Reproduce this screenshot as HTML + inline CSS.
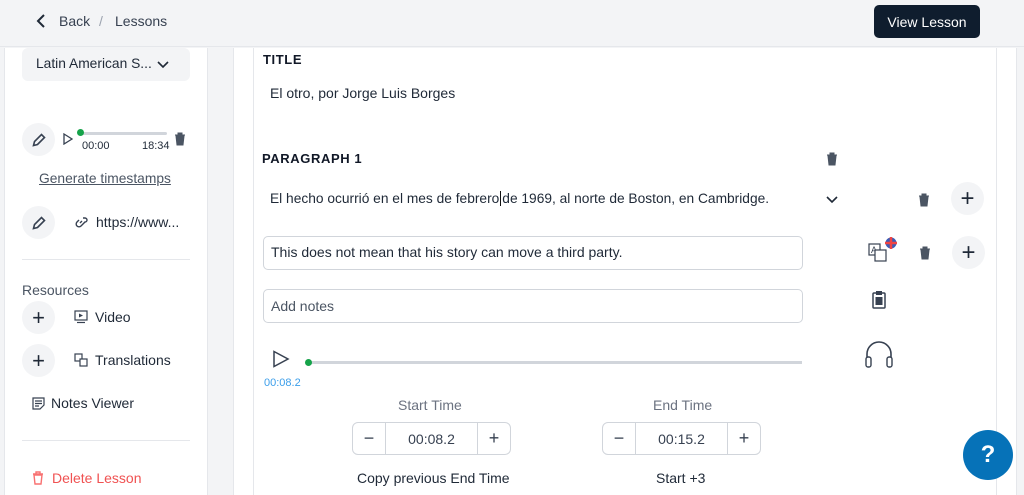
<!DOCTYPE html>
<html><head><meta charset="utf-8"><style>
*{box-sizing:border-box;margin:0;padding:0}
body{width:1024px;height:495px;overflow:hidden;background:#f3f4f6;font-family:"Liberation Sans",sans-serif;color:#1f2937;position:relative;font-size:14px}
.a{position:absolute}
.circ{position:absolute;width:33px;height:33px;border-radius:50%;background:#f3f4f6;display:flex;align-items:center;justify-content:center}
.lbl{font-weight:bold;font-size:13px;letter-spacing:.6px;color:#111827}
.box{position:absolute;border:1px solid #d1d5db;border-radius:5px;background:#fff}
.stepper{position:absolute;height:33px;border:1px solid #d1d5db;border-radius:6px;background:#fff;display:flex}
.stepper div{display:flex;align-items:center;justify-content:center;font-size:14px;color:#374151}
</style></head><body>
<div class="a" style="left:0;top:0;width:1024px;height:47px;background:#f3f4f6;border-bottom:1px solid #e5e7eb"></div>
<svg class="a" style="left:35px;top:13px" width="12" height="16" viewBox="0 0 12 16"><path d="M9 2 L3 8 L9 14" fill="none" stroke="#1f2937" stroke-width="2"/></svg>
<div class="a" style="left:59px;top:13px;color:#374151">Back</div>
<div class="a" style="left:99px;top:13px;color:#9ca3af">/</div>
<div class="a" style="left:115px;top:13px;color:#374151">Lessons</div>
<div class="a" style="left:874px;top:5px;width:106px;height:33px;background:#0f1d2e;border-radius:5px;color:#fff;display:flex;align-items:center;justify-content:center;font-size:14px">View Lesson</div>

<!-- sidebar -->
<div class="a" style="left:4px;top:48px;width:204px;height:447px;background:#fff;border-left:1px solid #e5e7eb;border-right:1px solid #e5e7eb"></div>
<div class="a" style="left:22px;top:48px;width:168px;height:33px;background:#f3f4f6;border-radius:6px"></div>
<div class="a" style="left:36px;top:56px;font-size:13.8px">Latin American S...</div>
<svg class="a" style="left:157px;top:61px" width="12" height="8"><path d="M1 1 L6 6 L11 1" fill="none" stroke="#1f2937" stroke-width="1.6"/></svg>
<div class="circ" style="left:22px;top:123px"><svg width="16" height="16" viewBox="0 0 16 16"><path d="M2.5 13.5 L3.5 9.5 L10.5 2.5 L13.5 5.5 L6.5 12.5 Z" fill="none" stroke="#374151" stroke-width="1.6"/></svg></div>
<svg class="a" style="left:63px;top:133px" width="10" height="12"><path d="M1 1 L9 6 L1 11 Z" fill="none" stroke="#374151" stroke-width="1.3"/></svg>
<div class="a" style="left:80px;top:132px;width:87px;height:3px;background:#d1d5db;border-radius:2px"></div>
<div class="a" style="left:77px;top:129px;width:7px;height:7px;border-radius:50%;background:#16a34a"></div>
<div class="a" style="left:82px;top:140px;font-size:11px">00:00</div>
<div class="a" style="left:142px;top:140px;font-size:11px">18:34</div>
<svg class="a" style="left:174px;top:132px" width="12" height="14" viewBox="0 0 12 14"><path d="M1 3 H11 M4 3 V1 H8 V3 M2 4 L3 13 H9 L10 4 Z" fill="#4b5563" stroke="#4b5563" stroke-width="1"/></svg>
<div class="a" style="left:39px;top:171px;color:#4b5563;text-decoration:underline;font-size:13.8px">Generate timestamps</div>
<div class="circ" style="left:22px;top:206px"><svg width="16" height="16" viewBox="0 0 16 16"><path d="M2.5 13.5 L3.5 9.5 L10.5 2.5 L13.5 5.5 L6.5 12.5 Z" fill="none" stroke="#374151" stroke-width="1.6"/></svg></div>
<svg class="a" style="left:74px;top:215px" width="14" height="14" viewBox="0 0 14 14"><path d="M6 8 L8 6 M5 5 L3 7 A2 2 0 0 0 7 11 L9 9 M9 3 L11 3 A2 2 0 0 1 11 7 L9 9" fill="none" stroke="#374151" stroke-width="1.4"/></svg>
<div class="a" style="left:96px;top:214px">https://www...</div>
<div class="a" style="left:22px;top:259px;width:168px;height:1px;background:#e5e7eb"></div>
<div class="a" style="left:22px;top:282px;color:#4b5563">Resources</div>
<div class="circ" style="left:22px;top:301px;font-size:22px;color:#1f2937">+</div>
<svg class="a" style="left:74px;top:310px" width="14" height="14" viewBox="0 0 14 14"><rect x="1" y="1" width="12" height="9" fill="none" stroke="#374151" stroke-width="1.2"/><path d="M5 3.5 L9 5.5 L5 7.5Z" fill="#374151"/><path d="M3 12.5 H11" stroke="#374151" stroke-width="1.2"/></svg>
<div class="a" style="left:95px;top:309px">Video</div>
<div class="circ" style="left:22px;top:344px;font-size:22px;color:#1f2937">+</div>
<svg class="a" style="left:74px;top:353px" width="14" height="14" viewBox="0 0 14 14"><rect x="1" y="1" width="7" height="7" fill="none" stroke="#374151" stroke-width="1.2"/><rect x="6" y="6" width="7" height="7" fill="#fff" stroke="#374151" stroke-width="1.2"/></svg>
<div class="a" style="left:95px;top:352px">Translations</div>
<svg class="a" style="left:32px;top:397px" width="13" height="13" viewBox="0 0 13 13"><path d="M1 1 H12 V8 L8 12 H1 Z M3 4 H10 M3 6.5 H10 M3 9 H7" fill="none" stroke="#374151" stroke-width="1.2"/></svg>
<div class="a" style="left:51px;top:395px">Notes Viewer</div>
<div class="a" style="left:22px;top:440px;width:168px;height:1px;background:#e5e7eb"></div>
<svg class="a" style="left:32px;top:471px" width="12" height="14" viewBox="0 0 12 14"><path d="M1 3 H11 M4 3 V1 H8 V3 M2 4 L3 13 H9 L10 4 Z" fill="none" stroke="#f87171" stroke-width="1.4"/></svg>
<div class="a" style="left:52px;top:470px;color:#f05252">Delete Lesson</div>

<!-- main -->
<div class="a" style="left:233px;top:48px;width:764px;height:447px;background:#fff;border-left:1px solid #e5e7eb;border-right:1px solid #e5e7eb"></div>
<div class="a" style="left:253px;top:48px;width:1px;height:447px;background:#e5e7eb"></div>
<div class="a" style="left:997px;top:48px;width:20px;height:447px;background:#fff;border-right:1px solid #e5e7eb"></div>
<div class="a lbl" style="left:263px;top:52px">TITLE</div>
<div class="a" style="left:270px;top:85px">El otro, por Jorge Luis Borges</div>
<div class="a lbl" style="left:262px;top:151px">PARAGRAPH 1</div>
<svg class="a" style="left:826px;top:152px" width="12" height="14" viewBox="0 0 12 14"><path d="M1 3 H11 M4 3 V1 H8 V3 M2 4 L3 13 H9 L10 4 Z" fill="#4b5563" stroke="#4b5563"/></svg>
<div class="a" style="left:270px;top:191px;font-size:13.75px">El hecho ocurrió en el mes de febrero<span style="border-left:1px solid #111;margin:0 1px"></span>de 1969, al norte de Boston, en Cambridge.</div>
<svg class="a" style="left:826px;top:196px" width="12" height="8"><path d="M1 1 L6 6 L11 1" fill="none" stroke="#1f2937" stroke-width="1.6"/></svg>
<svg class="a" style="left:918px;top:193px" width="12" height="14" viewBox="0 0 12 14"><path d="M1 3 H11 M4 3 V1 H8 V3 M2 4 L3 13 H9 L10 4 Z" fill="#4b5563" stroke="#4b5563"/></svg>
<div class="circ" style="left:951px;top:182px;font-size:24px">+</div>
<div class="box" style="left:263px;top:236px;width:540px;height:34px"></div>
<div class="a" style="left:271px;top:244px">This does not mean that his story can move a third party.</div>
<svg class="a" style="left:866px;top:234px" width="34" height="34" viewBox="0 0 34 34"><rect x="3" y="10" width="11" height="11" fill="#fff" stroke="#374151" stroke-width="1.2"/><text x="5" y="19" font-size="9" font-family="Liberation Sans" fill="#374151">A</text><rect x="9" y="16" width="11" height="11" fill="#fff" stroke="#374151" stroke-width="1.2"/><circle cx="25" cy="9" r="6" fill="#3b5bb5" stroke="#fff" stroke-width="1"/><path d="M19 9 H31 M25 3 V15" stroke="#ef4444" stroke-width="2.5"/></svg>
<svg class="a" style="left:919px;top:246px" width="12" height="14" viewBox="0 0 12 14"><path d="M1 3 H11 M4 3 V1 H8 V3 M2 4 L3 13 H9 L10 4 Z" fill="#4b5563" stroke="#4b5563"/></svg>
<div class="circ" style="left:952px;top:236px;font-size:24px">+</div>
<div class="box" style="left:263px;top:289px;width:540px;height:34px"></div>
<div class="a" style="left:271px;top:298px;color:#4b5563">Add notes</div>
<svg class="a" style="left:872px;top:290px" width="14" height="19" viewBox="0 0 14 19"><rect x="1" y="3" width="12" height="15" rx="1" fill="none" stroke="#374151" stroke-width="1.5"/><rect x="4" y="1" width="6" height="4" fill="#374151"/><rect x="3.5" y="7" width="7" height="8" fill="#374151"/></svg>
<svg class="a" style="left:864px;top:340px" width="30" height="29" viewBox="0 0 30 29"><path d="M3 20 V14 A12 12 0 0 1 27 14 V20" fill="none" stroke="#374151" stroke-width="1.6"/><rect x="2" y="17" width="5" height="10" rx="2" fill="#fff" stroke="#374151" stroke-width="1.4"/><rect x="23" y="17" width="5" height="10" rx="2" fill="#fff" stroke="#374151" stroke-width="1.4"/></svg>
<svg class="a" style="left:272px;top:350px" width="18" height="18" viewBox="0 0 18 18"><path d="M2 1.5 L16 9 L2 16.5 Z" fill="none" stroke="#374151" stroke-width="1.5"/></svg>
<div class="a" style="left:308px;top:361px;width:494px;height:3px;background:#d1d5db"></div>
<div class="a" style="left:305px;top:359px;width:7px;height:7px;border-radius:50%;background:#16a34a"></div>
<div class="a" style="left:264px;top:377px;font-size:11px;color:#3b9eea">00:08.2</div>
<div class="a" style="left:398px;top:397px;color:#6b7280">Start Time</div>
<div class="stepper" style="left:352px;top:422px;width:159px"><div style="width:33px;border-right:1px solid #d1d5db;font-size:18px">−</div><div style="width:92px;border-right:1px solid #d1d5db">00:08.2</div><div style="width:32px;font-size:18px">+</div></div>
<div class="a" style="left:357px;top:470px">Copy previous End Time</div>
<div class="a" style="left:653px;top:397px;color:#6b7280">End Time</div>
<div class="stepper" style="left:602px;top:422px;width:159px"><div style="width:33px;border-right:1px solid #d1d5db;font-size:18px">−</div><div style="width:92px;border-right:1px solid #d1d5db">00:15.2</div><div style="width:32px;font-size:18px">+</div></div>
<div class="a" style="left:656px;top:470px">Start +3</div>
<div class="a" style="left:963px;top:430px;width:50px;height:50px;border-radius:50%;background:#0672b8;color:#fff;font-weight:bold;font-size:24px;display:flex;align-items:center;justify-content:center">?</div>
</body></html>
